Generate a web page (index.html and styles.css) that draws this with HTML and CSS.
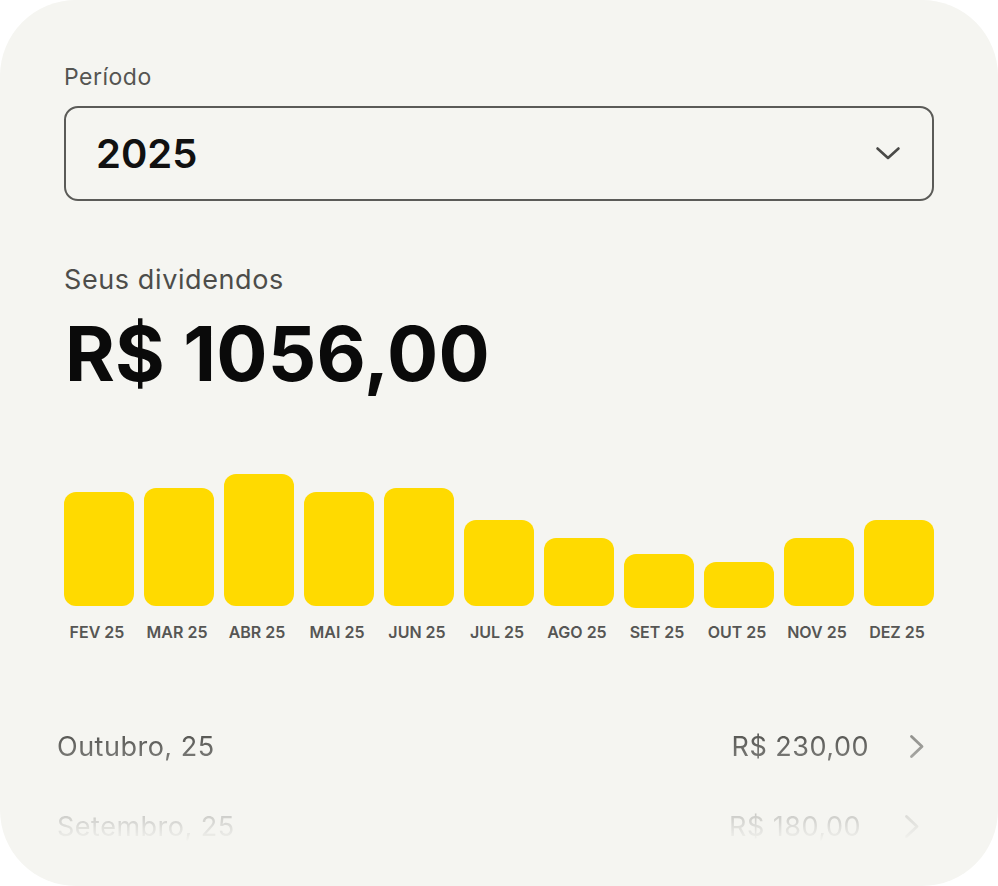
FILE: index.html
```html
<!DOCTYPE html>
<html lang="pt-BR">
<head>
<meta charset="utf-8">
<title>Dividendos</title>
<link rel="stylesheet" href="styles.css">
</head>
<body>
<main class="card">
  <div class="field-label">Período</div>
  <div class="select">
    <span class="select-value">2025</span>
    <svg class="select-chevron" width="26" height="15" viewBox="0 0 26 15" aria-hidden="true">
      <path d="M2.5 2.5 L13 12 L23.5 2.5" fill="none" stroke="#4a4a48" stroke-width="2.6" stroke-linecap="round" stroke-linejoin="round"/>
    </svg>
  </div>

  <div class="summary-label">Seus dividendos</div>
  <div class="summary-value">R$ 1056,00</div>

  <div class="chart">
    <div class="bars">
      <div class="bar" style="height:114px"></div>
      <div class="bar" style="height:118px"></div>
      <div class="bar" style="height:132px"></div>
      <div class="bar" style="height:114px"></div>
      <div class="bar" style="height:118px"></div>
      <div class="bar" style="height:86px"></div>
      <div class="bar" style="height:68px"></div>
      <div class="bar bar-low" style="height:54px"></div>
      <div class="bar bar-low" style="height:46px"></div>
      <div class="bar" style="height:68px"></div>
      <div class="bar" style="height:86px"></div>
    </div>
    <div class="labels">
      <span>FEV 25</span><span>MAR 25</span><span>ABR 25</span><span>MAI 25</span><span>JUN 25</span><span>JUL 25</span><span>AGO 25</span><span>SET 25</span><span>OUT 25</span><span>NOV 25</span><span>DEZ 25</span>
    </div>
  </div>

  <div class="list">
    <div class="row">
      <span class="row-month">Outubro, 25</span>
      <span class="row-amount">R$ 230,00</span>
      <svg class="row-chevron" width="16" height="25" viewBox="0 0 16 25" aria-hidden="true">
        <path d="M2.5 2.5 L13 12.5 L2.5 22.5" fill="none" stroke="#8a8a86" stroke-width="2.8" stroke-linecap="round" stroke-linejoin="round"/>
      </svg>
    </div>
    <div class="row row-far">
      <span class="row-month">Setembro, 25</span>
      <span class="row-amount">R$ 180,00</span>
      <svg class="row-chevron" width="16" height="25" viewBox="0 0 16 25" aria-hidden="true">
        <path d="M2.5 2.5 L13 12.5 L2.5 22.5" fill="none" stroke="#8a8a86" stroke-width="2.8" stroke-linecap="round" stroke-linejoin="round"/>
      </svg>
    </div>
  </div>
</main>
</body>
</html>
```

FILE: styles.css
```css
* { box-sizing: border-box; }

html, body {
  margin: 0;
  padding: 0;
  background: #ffffff;
}

body {
  font-family: Inter, "Noto Sans", "Liberation Sans", sans-serif;
  color: #4d4d4a;
}

.card {
  width: 998px;
  height: 886px;
  background: #f5f5f1;
  border-radius: 76px;
  padding: 63px 64px 0 64px;
  overflow: hidden;
  display: flex;
  flex-direction: column;
}

.field-label {
  font-size: 23px;
  line-height: 28px;
  letter-spacing: 0.5px;
  color: #555552;
}

.select {
  margin-top: 15px;
  height: 95px;
  border: 2px solid #5b5b58;
  border-radius: 14px;
  display: flex;
  align-items: center;
  justify-content: space-between;
  padding: 0 31px 0 30px;
}

.select-value {
  font-size: 40px;
  font-weight: 600;
  color: #111111;
  line-height: 1;
}

.select-chevron { display: block; }

.summary-label {
  margin-top: 64px;
  font-size: 27px;
  line-height: 30px;
  letter-spacing: 0.6px;
  color: #4d4d4a;
}

.summary-value {
  margin-top: 20px;
  font-size: 76px;
  line-height: 76px;
  font-weight: 700;
  letter-spacing: 0.2px;
  color: #0a0a0a;
  margin-left: 1px;
}

.chart {
  margin-top: 55px;
}

.bars {
  height: 160px;
  display: grid;
  grid-template-columns: repeat(11, 70px);
  column-gap: 10px;
  align-items: end;
}

.bar {
  background: #ffda00;
  border-radius: 12px;
}

.bar-low {
  margin-bottom: -2px;
}

.labels {
  margin-top: 16px;
  margin-left: -2px;
  display: grid;
  grid-template-columns: repeat(11, 70px);
  column-gap: 10px;
  font-size: 16px;
  line-height: 20px;
  font-weight: 600;
  color: #565654;
  text-align: center;
  white-space: nowrap;
}

.labels span {
  display: flex;
  justify-content: center;
}

.list {
  margin: 64px -7px 0 -7px;
  -webkit-mask-image: linear-gradient(to bottom, #000 0px, #000 22px, transparent 136px);
  mask-image: linear-gradient(to bottom, #000 0px, #000 22px, transparent 136px);
}

.row {
  height: 80px;
  display: flex;
  align-items: center;
  color: #4d4d4a;
  font-size: 27px;
  letter-spacing: 0.5px;
  padding-right: 16px;
}

.row-far {
  padding-right: 21px;
}

.row-far .row-amount {
  margin-right: 43px;
}

.row-month {
  flex: 1;
}

.row-amount {
  margin-right: 40px;
}

.row-chevron { display: block; }
```
